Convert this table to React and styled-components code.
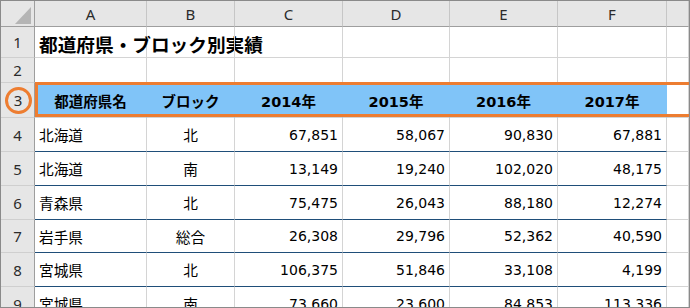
import React from 'react';
import styled, { createGlobalStyle } from 'styled-components';

const GlobalStyle = createGlobalStyle`
  html, body {
    margin: 0;
    padding: 0;
    background: #ffffff;
  }
  * {
    box-sizing: border-box;
  }
`;

const COLS = '34px 112px 88px 108px 107px 108px 109px 1fr';

const Sheet = styled.div`
  width: 690px;
  height: 308px;
  border: 1px solid #8a8a8a;
  overflow: hidden;
  background: #ffffff;
  font-family: "DejaVu Sans", "Noto Sans CJK JP", sans-serif;
  color: #000000;
`;

const Row = styled.div`
  display: grid;
  grid-template-columns: ${COLS};
  height: ${(p) => p.$h}px;
  position: relative;
`;

const ColHead = styled.div`
  display: flex;
  align-items: center;
  justify-content: center;
  background: #e6e6e6;
  border-right: 1px solid #c6c6c6;
  border-bottom: 1px solid #9e9e9e;
  font-family: "Noto Sans", sans-serif;
  font-size: 15px;
  color: #2b2b2b;
`;

const Corner = styled(ColHead)`
  justify-content: flex-end;
  align-items: flex-end;
  padding: 0 3px 2px 0;
  border-right: 1px solid #9e9e9e;
`;

const RowHead = styled.div`
  display: flex;
  align-items: center;
  justify-content: center;
  background: #e6e6e6;
  border-right: 1px solid #9e9e9e;
  border-bottom: 1px solid #cfcfcf;
  font-family: "Noto Sans", sans-serif;
  font-size: 15px;
  color: #2b2b2b;
`;

const Ring = styled.span`
  display: flex;
  align-items: center;
  justify-content: center;
  width: 27px;
  height: 27px;
  border: 3px solid #ed7d31;
  border-radius: 50%;
  margin-left: 1px;
`;

const Cell = styled.div`
  display: flex;
  align-items: center;
  justify-content: ${(p) => p.$align || 'flex-start'};
  padding: 0 4px 0 4px;
  border-right: 1px solid ${(p) => (p.$noGrid ? 'transparent' : '#d4d4d4')};
  border-bottom: 1px solid ${(p) => p.$line || '#d4d4d4'};
  background: ${(p) => p.$bg || 'transparent'};
  font-size: 14.67px;
  white-space: nowrap;
`;

const Title = styled.span`
  font-family: "Noto Sans CJK JP", sans-serif;
  font-weight: 700;
  font-size: 18.67px;
  margin-top: 2px;
`;

const HeadLabel = styled.span`
  font-weight: 700;
  font-size: 14.5px;
`;

const Num = styled.span`
  font-size: 14px;
`;

const Frame = styled.div`
  position: absolute;
  left: 34px;
  right: -4px;
  top: -1px;
  bottom: 1px;
  border: 3px solid #ed7d31;
  pointer-events: none;
`;

const CornerMark = () => (
  <svg width="16" height="17" viewBox="0 0 16 17">
    <polygon points="16,0 16,17 0,17" fill="#b5b5b5" />
  </svg>
);

const letters = ['A', 'B', 'C', 'D', 'E', 'F'];
const heads = ['都道府県名', 'ブロック', '2014年', '2015年', '2016年', '2017年'];

const data = [
  ['北海道', '北', '67,851', '58,067', '90,830', '67,881'],
  ['北海道', '南', '13,149', '19,240', '102,020', '48,175'],
  ['青森県', '北', '75,475', '26,043', '88,180', '12,274'],
  ['岩手県', '総合', '26,308', '29,796', '52,362', '40,590'],
  ['宮城県', '北', '106,375', '51,846', '33,108', '4,199'],
  ['宮城県', '南', '73,660', '23,600', '84,853', '113,336'],
];

const rowHeights = [34, 34, 34, 33, 34, 34];
const NAVY = '#1f4e79';

function App() {
  return (
    <>
      <GlobalStyle />
      <Sheet>
        <Row $h={26}>
          <Corner>
            <CornerMark />
          </Corner>
          {letters.map((l) => (
            <ColHead key={l}>{l}</ColHead>
          ))}
          <ColHead />
        </Row>

        <Row $h={31}>
          <RowHead>1</RowHead>
          <Cell>
            <Title>都道府県・ブロック別実績</Title>
          </Cell>
          {letters.slice(1).map((l) => (
            <Cell key={l} />
          ))}
          <Cell />
        </Row>

        <Row $h={25}>
          <RowHead>2</RowHead>
          {letters.map((l) => (
            <Cell key={l} />
          ))}
          <Cell />
        </Row>

        <Row $h={35}>
          <RowHead>
            <Ring>3</Ring>
          </RowHead>
          {heads.map((h) => (
            <Cell key={h} $align="center" $bg="#80c4f8" $noGrid>
              <HeadLabel>{h}</HeadLabel>
            </Cell>
          ))}
          <Cell />
          <Frame />
        </Row>

        {data.map((r, i) => (
          <Row key={i} $h={rowHeights[i]}>
            <RowHead>{i + 4}</RowHead>
            <Cell $line={NAVY}>{r[0]}</Cell>
            <Cell $line={NAVY} $align="center">
              {r[1]}
            </Cell>
            {r.slice(2).map((v, j) => (
              <Cell key={j} $line={NAVY} $align="flex-end">
                <Num>{v}</Num>
              </Cell>
            ))}
            <Cell />
          </Row>
        ))}
      </Sheet>
    </>
  );
}

export default App;
